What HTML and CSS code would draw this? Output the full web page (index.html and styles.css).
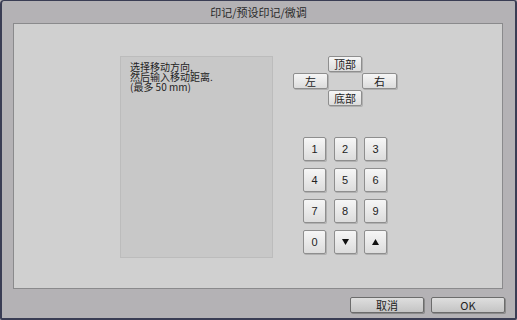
FILE: index.html
```html
<!DOCTYPE html>
<html>
<head>
<meta charset="utf-8">
<link rel="stylesheet" href="styles.css">
</head>
<body>
<div class="window">
  <div class="title">印记/预设印记/微调</div>
  <div class="panel">
    <div class="info">选择移动方向,<br>然后输入移动距离.<br>(最多 50 mm)</div>
    <div class="controls">
      <div class="dirpad">
        <div class="btn dir top">顶部</div>
        <div class="btn dir left">左</div>
        <div class="btn dir right">右</div>
        <div class="btn dir bottom">底部</div>
      </div>
      <div class="keypad">
        <div class="btn key">1</div>
        <div class="btn key">2</div>
        <div class="btn key">3</div>
        <div class="btn key">4</div>
        <div class="btn key">5</div>
        <div class="btn key">6</div>
        <div class="btn key">7</div>
        <div class="btn key">8</div>
        <div class="btn key">9</div>
        <div class="btn key">0</div>
        <div class="btn key"><svg width="7" height="6" viewBox="0 0 7 6"><polygon points="0,0 7,0 3.5,6" fill="#111"/></svg></div>
        <div class="btn key"><svg width="7" height="6" viewBox="0 0 7 6"><polygon points="0,6 7,6 3.5,0" fill="#111"/></svg></div>
      </div>
    </div>
  </div>
  <div class="footer">
    <div class="btn foot">取消</div>
    <div class="btn foot">OK</div>
  </div>
</div>
</body>
</html>
```

FILE: styles.css
```css
* { box-sizing: border-box; }
html, body { margin: 0; padding: 0; }
body {
  width: 517px;
  height: 320px;
  background: #b4b2b5;
  font-family: "Noto Sans CJK SC", "Liberation Sans", sans-serif;
  color: #222;
}
.window {
  width: 517px;
  height: 320px;
  background: #b4b2b5;
  border: 2px solid #3a3d54;
  border-top-width: 1px;
  border-radius: 4px 3px 2px 2px;
  display: flex;
  flex-direction: column;
}
.title {
  height: 22px;
  line-height: 22px;
  text-align: center;
  font-size: 11px;
  color: #2a2a2a;
}
.panel {
  margin-left: 11px;
  width: 490px;
  height: 266px;
  background: #d0d0d0;
  border: 1px solid #8a8a8c;
  display: flex;
  padding: 32px 0 0 106px;
}
.info {
  width: 153px;
  height: 202px;
  background: #c8c8c8;
  border: 1px solid #bcbcbc;
  padding: 5px 0 0 9px;
  font-size: 10px;
  line-height: 10px;
  color: #1e1e1e;
}
.controls {
  margin-left: 20px;
  display: flex;
  flex-direction: column;
}
.btn {
  display: flex;
  align-items: center;
  justify-content: center;
  background: linear-gradient(#f6f6f6, #dcdcdc);
  border: 1px solid #8e8e8e;
  border-radius: 2px;
  box-shadow: 1px 1px 0 #b0b0b0;
  color: #222;
}
.dirpad {
  display: grid;
  grid-template-columns: 35px 34px 35px;
  grid-template-rows: 16px 16px 16px;
  row-gap: 1px;
}
.dir { font-size: 11px; }
.top { grid-column: 2; grid-row: 1; }
.left { grid-column: 1; grid-row: 2; }
.right { grid-column: 3; grid-row: 2; }
.bottom { grid-column: 2; grid-row: 3; }
.keypad {
  margin: 31px 0 0 10px;
  display: grid;
  grid-template-columns: repeat(3, 23px);
  grid-auto-rows: 24px;
  column-gap: 7.5px;
  row-gap: 7px;
}
.key {
  font-family: "Liberation Sans", sans-serif;
  font-size: 11px;
}
.footer {
  display: flex;
  justify-content: flex-end;
  gap: 7px;
  padding: 8px 10px 0 0;
}
.foot {
  width: 74px;
  height: 16px;
  font-size: 11px;
  background: linear-gradient(#dedede, #c4c4c4);
  border-color: #6c6c6c;
  box-shadow: 1px 1px 0 #8a8a8a;
}
```
